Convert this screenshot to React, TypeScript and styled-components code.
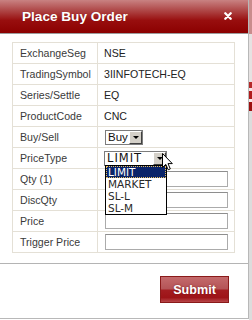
import React from "react";
import styled, { createGlobalStyle } from "styled-components";

const GlobalStyle = createGlobalStyle`
  html, body { margin: 0; padding: 0; }
  body { background: #ffffff; font-family: "Liberation Sans", Arial, sans-serif; }
`;

const Page = styled.div`
  width: 252px;
  height: 320px;
  display: flex;
  overflow: hidden;
  background: #ffffff;
`;

const Dialog = styled.div`
  width: 249px;
  height: 319px;
  flex: none;
  box-sizing: border-box;
  border-right: 1px solid #b8b8b8;
  border-bottom: 1px solid #b8b8b8;
  display: flex;
  flex-direction: column;
  background: #ffffff;
`;

const Header = styled.div`
  height: 34px;
  flex: none;
  box-sizing: border-box;
  border-bottom: 1px solid #9c9c9c;
  background: linear-gradient(#c98282 0%, #b04a4a 30%, #980e0e 62%, #8b0000 100%);
  display: flex;
  align-items: center;
  justify-content: space-between;
  padding: 0 16px 1px 22px;
`;

const Title = styled.div`
  color: #ffffff;
  font-family: "Liberation Sans", Arial, sans-serif;
  font-weight: bold;
  font-size: 13.6px;
  text-shadow: 0 0 1px rgba(80, 0, 0, 0.4);
`;

const CloseIcon = styled.svg`
  width: 8px;
  height: 8px;
  display: block;
  margin-top: -1px;
`;

const Body = styled.div`
  padding: 8px 0 10px 12px;
`;

const Table = styled.table`
  border-collapse: collapse;
  width: 223px;
  table-layout: fixed;
  border: 1px solid #e4e0d6;
`;

const Row = styled.tr`
  height: 21px;
`;

const Cell = styled.td<{ $label?: boolean }>`
  border: 1px solid #e4e0d6;
  padding: 0 0 0 ${(p) => (p.$label ? 7 : 6)}px;
  width: ${(p) => (p.$label ? "85px" : "auto")};
  font-family: "Liberation Sans", Arial, sans-serif;
  font-size: 10.6px;
  color: ${(p) => (p.$label ? "#3a3a3a" : "#222222")};
  white-space: nowrap;
  vertical-align: middle;
  box-sizing: border-box;
`;

const SelectWrap = styled.div<{ $shift?: number }>`
  position: relative;
  display: inline-block;
  vertical-align: middle;
  margin-left: ${(p) => p.$shift ?? 1}px;
`;

const SelectBox = styled.div<{ $w: number }>`
  display: flex;
  align-items: stretch;
  width: ${(p) => p.$w}px;
  height: 15px;
  box-sizing: border-box;
  border: 1px solid #7c7c7c;
  background: #ffffff;
`;

const SelectText = styled.span<{ $big?: boolean }>`
  flex: 1;
  padding-left: 2px;
  font-family: ${(p) => (p.$big ? '"DejaVu Sans", Verdana, sans-serif' : '"Liberation Sans", Arial, sans-serif')};
  font-size: 11.5px;
  letter-spacing: ${(p) => (p.$big ? "1px" : "0")};
  line-height: 13px;
  color: #111111;
`;

const ArrowBtn = styled.span`
  width: 13px;
  flex: none;
  box-sizing: border-box;
  background: #d4d0c8;
  border-style: solid;
  border-width: 1px;
  border-color: #ffffff #404040 #404040 #ffffff;
  display: flex;
  align-items: center;
  justify-content: center;
`;

const Triangle = styled.span`
  width: 0;
  height: 0;
  border-left: 3px solid transparent;
  border-right: 3px solid transparent;
  border-top: 3px solid #000000;
`;

const ListBox = styled.div`
  position: absolute;
  left: 1px;
  top: 14px;
  width: 62px;
  box-sizing: border-box;
  border: 1px solid #000000;
  background: #ffffff;
  z-index: 5;
`;

const ListItem = styled.div<{ $active?: boolean }>`
  height: 12px;
  line-height: 12px;
  padding-left: 2px;
  box-sizing: border-box;
  font-family: "DejaVu Sans", Verdana, sans-serif;
  font-size: 10.5px;
  color: ${(p) => (p.$active ? "#ffffff" : "#2a2a2a")};
  background: ${(p) => (p.$active ? "#0a246a" : "#ffffff")};
  outline: ${(p) => (p.$active ? "1px dotted #e8c060" : "none")};
  outline-offset: -1px;
`;

const Cursor = styled.svg`
  position: absolute;
  left: 58px;
  top: 2px;
  width: 11px;
  height: 18px;
  z-index: 6;
`;

const TextInput = styled.input`
  display: block;
  width: 123px;
  height: 16px;
  margin: 0 0 0 1px;
  padding: 0;
  box-sizing: border-box;
  border: 1px solid #ababab;
  border-top-color: #8e8e8e;
  background: #ffffff;
  outline: none;
`;

const Footer = styled.div`
  flex: 1;
  border-top: 1px solid #b4b4b4;
  display: flex;
  justify-content: flex-end;
  align-items: flex-start;
  padding: 12px 19px 0 0;
`;

const SubmitButton = styled.button`
  width: 69px;
  height: 27px;
  padding: 0;
  box-sizing: border-box;
  border: 1px solid #8a1a1a;
  background: linear-gradient(#c46a6c 0%, #b55558 46%, #a31c20 54%, #9e1418 82%, #b8474a 100%);
  color: #ffffff;
  font-family: "Liberation Sans", Arial, sans-serif;
  font-weight: bold;
  font-size: 12.6px;
  text-shadow: 0 0 2px rgba(90, 0, 0, 0.6);
  cursor: pointer;
`;

const Backdrop = styled.div`
  flex: 1;
  display: flex;
  flex-direction: column;
  background: #dcdcdc;
`;

const Stripe = styled.div<{ $h: number; $c: string }>`
  height: ${(p) => p.$h}px;
  flex: none;
  background: ${(p) => p.$c};
`;

const stripes = [
  { h: 34, c: "#c98c8c" },
  { h: 48, c: "#e6e2e2" },
  { h: 6, c: "#b42a2a" },
  { h: 3, c: "#f2e4e4" },
  { h: 8, c: "#b01c1c" },
  { h: 3, c: "#f4eaea" },
  { h: 9, c: "#9c1010" },
  { h: 209, c: "#dcdcdc" },
];

type Field =
  | { label: string; kind: "text"; value: string }
  | { label: string; kind: "buy" }
  | { label: string; kind: "price" }
  | { label: string; kind: "input" };

const fields: Field[] = [
  { label: "ExchangeSeg", kind: "text", value: "NSE" },
  { label: "TradingSymbol", kind: "text", value: "3IINFOTECH-EQ" },
  { label: "Series/Settle", kind: "text", value: "EQ" },
  { label: "ProductCode", kind: "text", value: "CNC" },
  { label: "Buy/Sell", kind: "buy" },
  { label: "PriceType", kind: "price" },
  { label: "Qty (1)", kind: "input" },
  { label: "DiscQty", kind: "input" },
  { label: "Price", kind: "input" },
  { label: "Trigger Price", kind: "input" },
];

const priceTypes = ["LIMIT", "MARKET", "SL-L", "SL-M"];

function renderValue(f: Field) {
  switch (f.kind) {
    case "text":
      return f.value;
    case "buy":
      return (
        <SelectWrap $shift={1}>
          <SelectBox $w={38}>
            <SelectText>Buy</SelectText>
            <ArrowBtn>
              <Triangle />
            </ArrowBtn>
          </SelectBox>
        </SelectWrap>
      );
    case "price":
      return (
        <SelectWrap $shift={0}>
          <SelectBox $w={63}>
            <SelectText $big>LIMIT</SelectText>
            <ArrowBtn>
              <Triangle />
            </ArrowBtn>
          </SelectBox>
          <ListBox>
            {priceTypes.map((t, i) => (
              <ListItem key={t} $active={i === 0}>
                {t}
              </ListItem>
            ))}
          </ListBox>
          <Cursor viewBox="0 0 11 18">
            <path
              d="M0.5 0.5 L0.5 14.5 L3.8 11.4 L6.2 16.8 L8.3 15.9 L6 10.6 L10.3 10.6 Z"
              fill="#ffffff"
              stroke="#000000"
              strokeWidth="1"
              strokeLinejoin="miter"
            />
          </Cursor>
        </SelectWrap>
      );
    case "input":
      return <TextInput type="text" />;
  }
}

export default function App() {
  return (
    <>
      <GlobalStyle />
      <Page>
        <Dialog>
          <Header>
            <Title>Place Buy Order</Title>
            <CloseIcon viewBox="0 0 8 8">
              <path d="M1.3 1.3 L6.7 6.7 M6.7 1.3 L1.3 6.7" stroke="#ffffff" strokeWidth="2.3" strokeLinecap="round" />
            </CloseIcon>
          </Header>
          <Body>
            <Table>
              <tbody>
                {fields.map((f) => (
                  <Row key={f.label}>
                    <Cell $label>{f.label}</Cell>
                    <Cell>{renderValue(f)}</Cell>
                  </Row>
                ))}
              </tbody>
            </Table>
          </Body>
          <Footer>
            <SubmitButton type="button">Submit</SubmitButton>
          </Footer>
        </Dialog>
        <Backdrop>
          {stripes.map((s, i) => (
            <Stripe key={i} $h={s.h} $c={s.c} />
          ))}
        </Backdrop>
      </Page>
    </>
  );
}
